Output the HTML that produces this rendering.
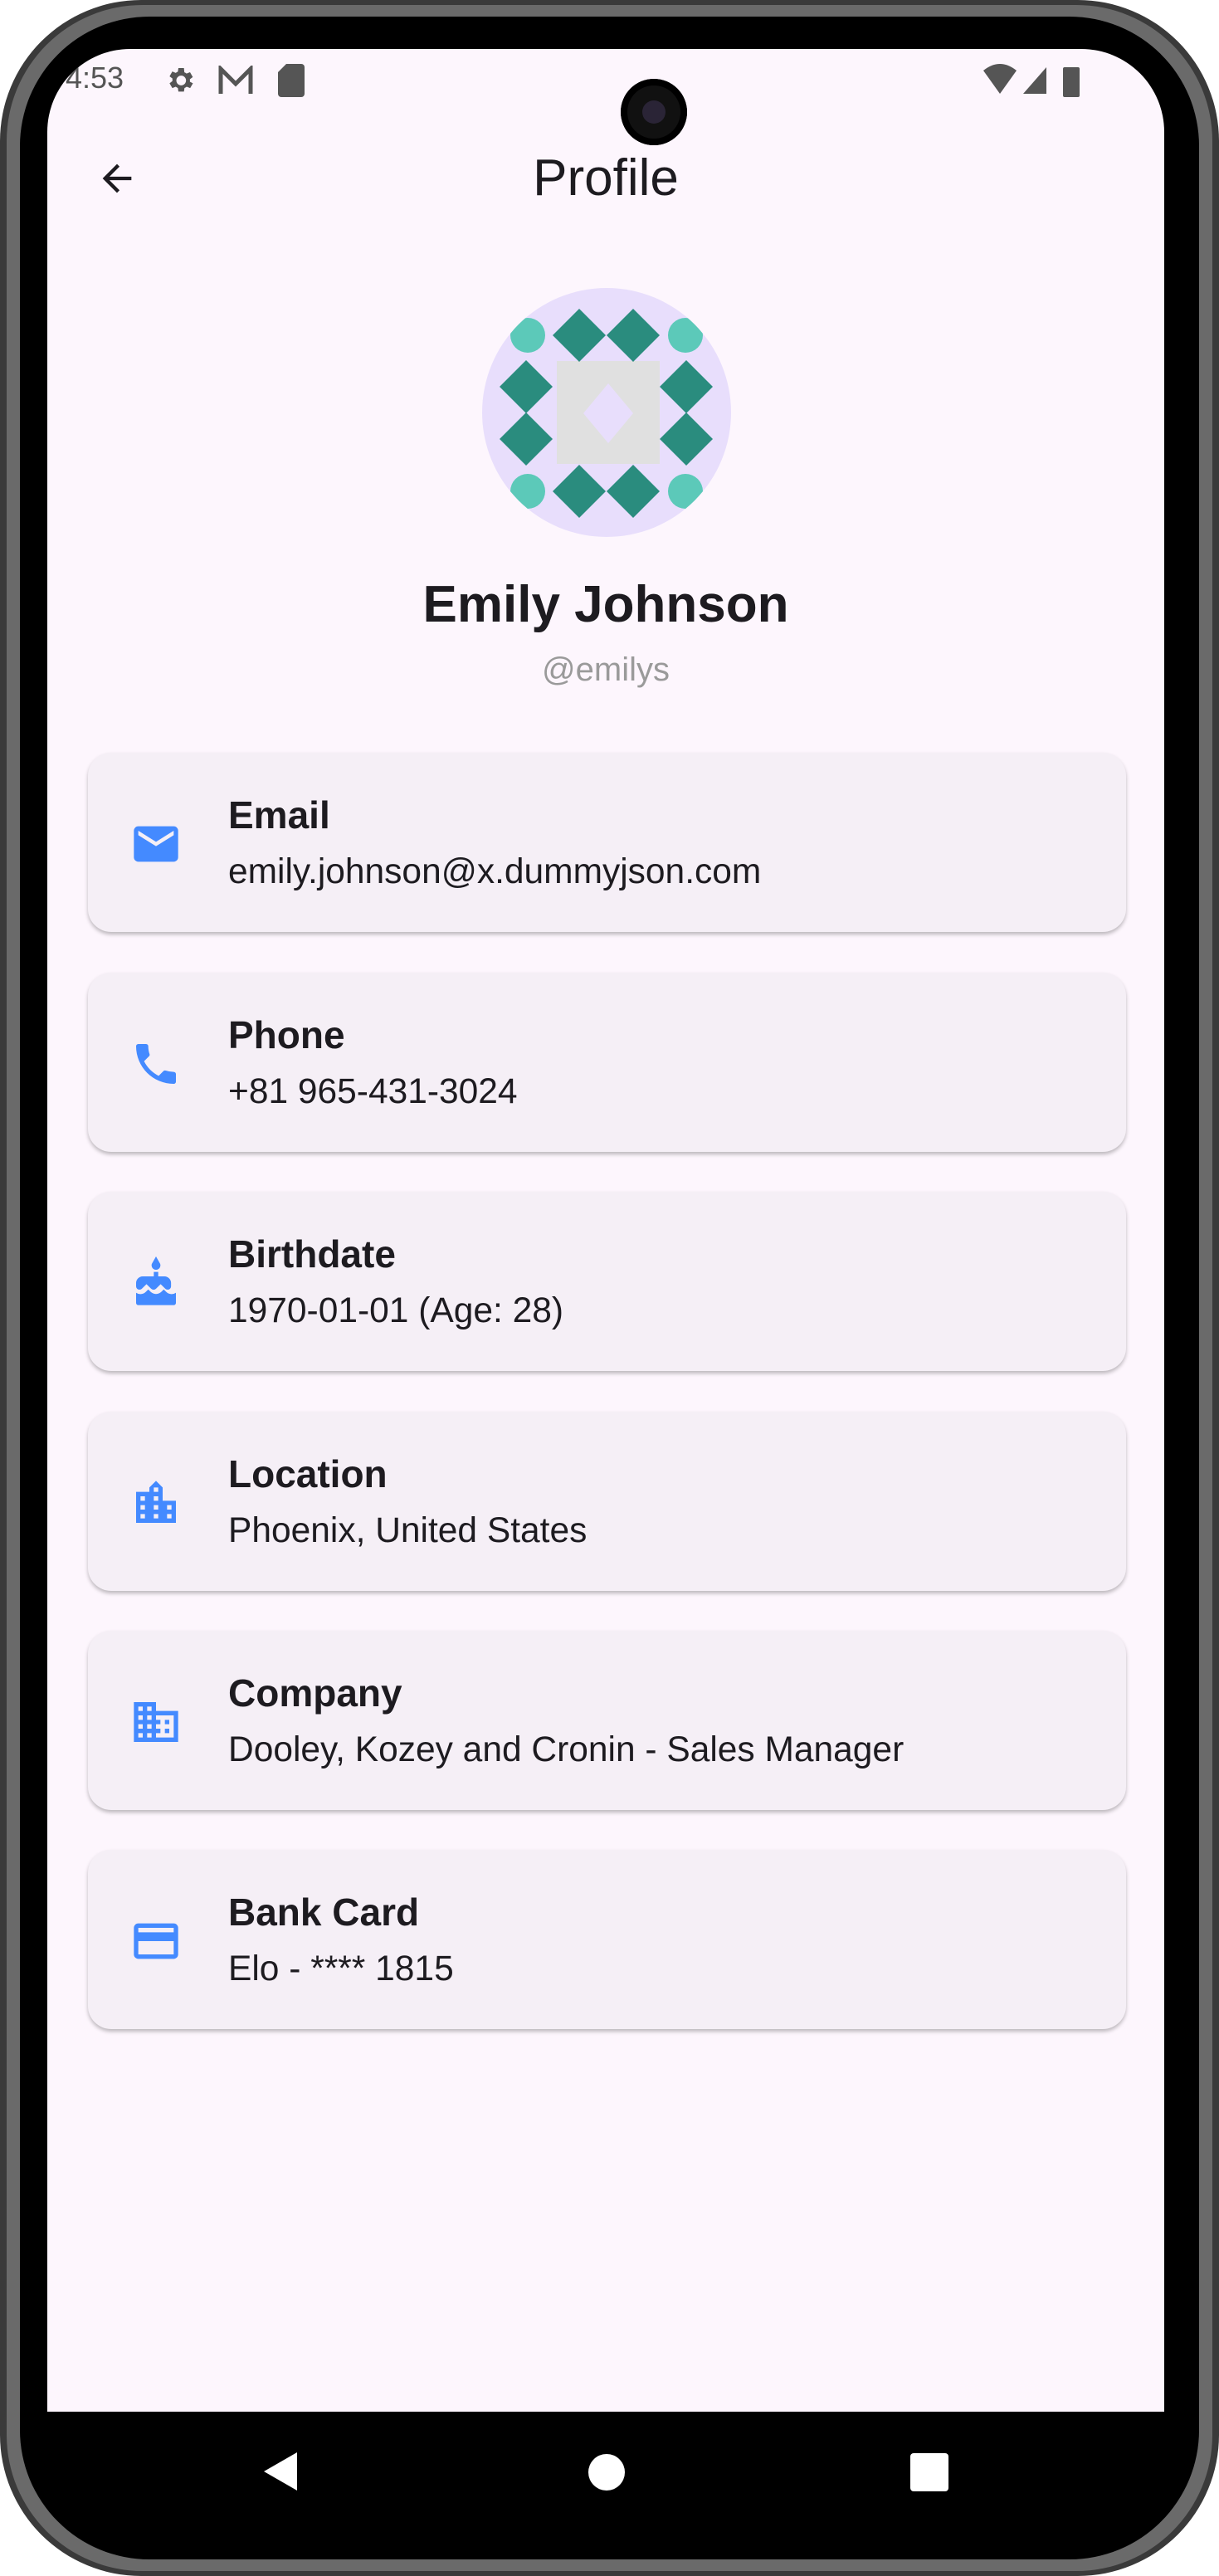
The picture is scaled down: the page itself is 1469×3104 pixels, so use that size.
<!DOCTYPE html>
<html><head><meta charset="utf-8"><style>
*{margin:0;padding:0;box-sizing:border-box}
html,body{width:1469px;height:3104px;background:#fff;overflow:hidden;font-family:"Liberation Sans",sans-serif}
.phone{position:absolute;left:0;top:0;width:1469px;height:3104px;border-radius:170px;background:#3a3a3a;}
.phone2{position:absolute;left:8px;top:6px;right:8px;bottom:6px;border-radius:164px;background:#6a6a6a}
.bezel{position:absolute;left:16px;top:14px;right:16px;bottom:14px;border-radius:156px;background:#000}
.screen{position:absolute;left:57px;top:59px;width:1346px;height:2847px;background:#fdf6fd;border-radius:100px 100px 0 0;overflow:hidden}
.status{position:absolute;top:16px;font-size:36px;color:#555}
.cam{position:absolute;left:691px;top:36px;width:80px;height:80px;border-radius:50%;background:#111;box-shadow:inset 0 0 0 8px #000}
.cam:after{content:"";position:absolute;left:26px;top:26px;width:28px;height:28px;border-radius:50%;background:#2a2436}
.title{position:absolute;left:0;width:1346px;text-align:center;top:120px;font-size:62px;color:#1d1b20}
.av{position:absolute;left:524px;top:288px;width:300px;height:300px;border-radius:50%;background:#e8defc;overflow:hidden}
.name{position:absolute;left:0;width:1346px;text-align:center;top:634px;font-size:62px;font-weight:bold;color:#1d1b20}
.user{position:absolute;left:0;width:1346px;text-align:center;top:726px;font-size:40px;color:#9a9a9a}
.card{position:absolute;left:49px;width:1251px;height:216px;background:#f5eff6;border-radius:28px;box-shadow:0 3px 5px rgba(0,0,0,.25)}
.card svg{position:absolute;left:50px;top:78px;width:64px;height:64px}
.ct{position:absolute;left:169px;top:48px;font-size:46px;font-weight:bold;color:#1d1b20}
.cv{position:absolute;left:169px;top:120px;font-size:42.5px;color:#1d1b20}
</style></head><body>
<div class="phone"><div class="phone2"><div class="bezel"></div></div></div>
<div class="screen">
 <div class="status" style="left:22px;top:14px">4:53</div>
 <svg class="status" style="left:140px;top:18px" width="40" height="40" viewBox="0 0 24 24" fill="#555"><path d="M19.1 12.9a7 7 0 000-1.8l2.1-1.6-2-3.5-2.5 1a7 7 0 00-1.6-.9L14.8 3h-4l-.4 2.6a7 7 0 00-1.5.9l-2.5-1-2 3.5 2.1 1.6a7 7 0 000 1.8l-2.1 1.6 2 3.5 2.5-1a7 7 0 001.5.9l.4 2.6h4l.4-2.6a7 7 0 001.6-.9l2.5 1 2-3.5zM12.8 15.5a3.5 3.5 0 110-7 3.5 3.5 0 010 7z"/></svg>
 <svg class="status" style="left:205px;top:20px" width="44" height="36" viewBox="0 0 22 18" fill="none" stroke="#555" stroke-width="2.5"><path d="M2 17V2l9 9 9-9v15"/></svg>
 <svg class="status" style="left:278px;top:18px" width="32" height="40" viewBox="0 0 16 20" fill="#555"><path d="M5 0h9a2 2 0 012 2v16a2 2 0 01-2 2H2a2 2 0 01-2-2V5z"/></svg>
 <svg class="status" style="left:1128px;top:18px" width="120" height="40" viewBox="0 0 60 20" fill="#555"><path d="M0 4q10-8 20 0l-10 14z"/><path d="M24 18l14-16v16z"/><rect x="48" y="2" width="10" height="18" rx="1"/></svg>
 <div class="cam"></div>
 <svg style="position:absolute;left:58px;top:130px" width="52" height="52" viewBox="0 0 24 24" fill="#1d1b20"><path d="M20 11H7.8l5.6-5.6L12 4l-8 8 8 8 1.4-1.4L7.8 13H20z"/></svg>
 <div class="title">Profile</div>
 <div class="av"><svg width="300" height="300" viewBox="0 0 300 300">
  <rect x="90" y="88" width="124" height="124" fill="#e0e0e0"/><path d="M152 115l30 36-30 36-30-36z" fill="#e8defc"/>
  <g fill="#5cc9b9"><circle cx="55" cy="57" r="21"/><circle cx="245" cy="57" r="21"/><circle cx="55" cy="245" r="21"/><circle cx="245" cy="245" r="21"/></g>
  <g fill="#2a8c7e">
  <path d="M117 25l32 32-32 32-32-32z"/><path d="M182 25l32 32-32 32-32-32z"/>
  <path d="M117 213l32 32-32 32-32-32z"/><path d="M182 213l32 32-32 32-32-32z"/>
  <path d="M53 87l32 32-32 32-32-32z"/><path d="M53 150l32 32-32 32-32-32z"/>
  <path d="M246 87l32 32-32 32-32-32z"/><path d="M246 150l32 32-32 32-32-32z"/></g>
 </svg></div>
 <div class="name">Emily Johnson</div>
 <div class="user">@emilys</div>

 <div class="card" style="top:848px"><svg viewBox="0 0 24 24" fill="#448aff"><path d="M20 4H4a2 2 0 00-2 2v12a2 2 0 002 2h16a2 2 0 002-2V6a2 2 0 00-2-2zm0 4l-8 5-8-5V6l8 5 8-5z"/></svg><div class="ct">Email</div><div class="cv">emily.johnson@x.dummyjson.com</div></div>
 <div class="card" style="top:1113px"><svg viewBox="0 0 24 24" fill="#448aff"><path d="M6.6 10.8a15.1 15.1 0 006.6 6.6l2.2-2.2a1 1 0 011-.2 11.4 11.4 0 003.6.6 1 1 0 011 1V20a1 1 0 01-1 1A17 17 0 013 4a1 1 0 011-1h3.5a1 1 0 011 1c0 1.3.2 2.5.6 3.6a1 1 0 01-.3 1z"/></svg><div class="ct">Phone</div><div class="cv">+81 965-431-3024</div></div>
 <div class="card" style="top:1377px"><svg viewBox="0 0 24 24" fill="#448aff"><path d="M12 6a2 2 0 002-2c0-.4-.1-.7-.3-1L12 0l-1.7 3c-.2.3-.3.6-.3 1a2 2 0 002 2zm4.6 10l-1.1-1.1-1.1 1.1a3.5 3.5 0 01-4.8 0l-1.1-1.1-1.1 1.1A3.4 3.4 0 015 17a3.4 3.4 0 01-2-.6V21a1 1 0 001 1h16a1 1 0 001-1v-4.6a3.4 3.4 0 01-2 .6 3.4 3.4 0 01-2.4-1zM18 9h-5V7h-2v2H6a3 3 0 00-3 3v1.5a1.5 1.5 0 001.5 1.5c.4 0 .8-.1 1.1-.4l2.1-2.1 2.1 2.1a1.6 1.6 0 002.2 0l2.1-2.1 2.1 2.1c.3.3.7.4 1.1.4a1.5 1.5 0 001.5-1.5V12a3 3 0 00-3-3z"/></svg><div class="ct">Birthdate</div><div class="cv">1970-01-01 (Age: 28)</div></div>
 <div class="card" style="top:1642px"><svg viewBox="0 0 24 24" fill="#448aff"><path d="M15 11V5l-3-3-3 3v2H3v14h18V11zm-8 8H5v-2h2zm0-4H5v-2h2zm0-4H5V9h2zm6 8h-2v-2h2zm0-4h-2v-2h2zm0-4h-2V9h2zm0-4h-2V5h2zm6 12h-2v-2h2zm0-4h-2v-2h2z"/></svg><div class="ct">Location</div><div class="cv">Phoenix, United States</div></div>
 <div class="card" style="top:1906px"><svg viewBox="0 0 24 24" fill="#448aff"><path d="M12 7V3H2v18h20V7zM6 19H4v-2h2zm0-4H4v-2h2zm0-4H4V9h2zm0-4H4V5h2zm4 12H8v-2h2zm0-4H8v-2h2zm0-4H8V9h2zm0-4H8V5h2zm10 12h-8v-2h2v-2h-2v-2h2v-2h-2V9h8zm-2-8h-2v2h2zm0 4h-2v2h2z"/></svg><div class="ct">Company</div><div class="cv">Dooley, Kozey and Cronin - Sales Manager</div></div>
 <div class="card" style="top:2170px"><svg viewBox="0 0 24 24" fill="#448aff"><path d="M20 4H4a2 2 0 00-2 2v12a2 2 0 002 2h16a2 2 0 002-2V6a2 2 0 00-2-2zm0 14H4v-6h16zm0-10H4V6h16z"/></svg><div class="ct">Bank Card</div><div class="cv">Elo - **** 1815</div></div>
</div>
<svg style="position:absolute;left:316px;top:2953px" width="44" height="50" viewBox="0 0 44 50" fill="#fff"><path d="M42 2L2 25l40 23z"/></svg>
<div style="position:absolute;left:709px;top:2957px;width:44px;height:44px;border-radius:50%;background:#fff"></div>
<div style="position:absolute;left:1097px;top:2956px;width:46px;height:46px;border-radius:4px;background:#fff"></div>
</body></html>
